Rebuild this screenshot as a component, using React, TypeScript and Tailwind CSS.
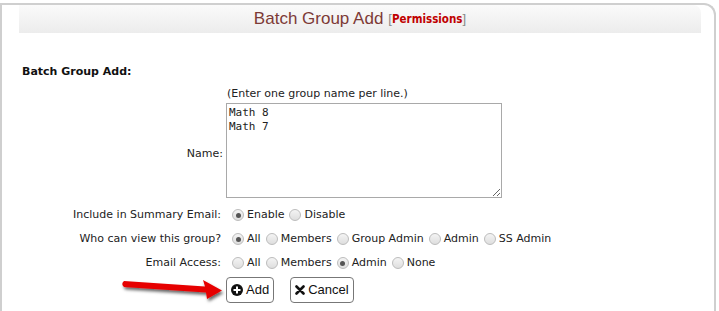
import React from "react";

const Radio = ({ label, checked }: { label: string; checked?: boolean }) => (
  <label className="flex items-center mr-[5px]">
    <span className="w-[12px] h-[12px] rounded-full border border-[#bcbcbc] bg-gradient-to-b from-[#f4f4f4] to-[#dedede] flex items-center justify-center mr-[3px]">
      {checked && <span className="w-[5px] h-[5px] rounded-full bg-[#555]"></span>}
    </span>
    <span>{label}</span>
  </label>
);

const Row = ({ label, children }: { label: string; children: React.ReactNode }) => (
  <div className="flex items-center h-[24px]">
    <div className="w-[222px] text-right pr-[3px]">{label}</div>
    <div className="flex items-center pl-[8px]">{children}</div>
  </div>
);

const App = () => {
  return (
    <div className="w-[719px] h-[311px] bg-white overflow-hidden relative font-['DejaVu_Sans',sans-serif] text-[11px] text-[#222]">
      <div className="mt-[3px] w-[716px] h-[320px] border-t-2 border-l-2 border-r-2 border-[#cfcfcf] rounded-tr-[12px]">
        <div className="ml-[17px] w-[682px] h-[28px] rounded-tr-[8px] bg-gradient-to-b from-[#fafafa] to-[#ececec] flex items-center justify-center">
          <span className="font-['Liberation_Sans',sans-serif] text-[17px] text-[#7d3a36]">Batch Group Add</span>
          <span className="ml-[5px] font-['Liberation_Sans',sans-serif] text-[13px] text-[#888]">
            [<span className="font-['DejaVu_Sans_Condensed',sans-serif] font-bold text-[11.5px] text-[#c00000]">Permissions</span>]
          </span>
        </div>

        <div className="pl-[20px] pt-[31px] font-bold text-[#111]">Batch Group Add:</div>

        <div className="pl-[225px] pt-[5px] text-[#222]">(Enter one group name per line.)</div>

        <div className="flex items-center mt-[1px]">
          <div className="w-[224px] text-right pr-[3px] pt-[7px]">Name:</div>
          <textarea
            defaultValue={"Math 8\nMath 7"}
            className="w-[276px] h-[95px] border border-[#a9a9a9] px-[2px] py-[2px] font-['DejaVu_Sans_Mono',monospace] text-[11px] leading-[14px] text-[#222] resize-y outline-none"
          ></textarea>
        </div>

        <div className="mt-[5px]">
          <Row label="Include in Summary Email:">
            <Radio label="Enable" checked />
            <Radio label="Disable" />
          </Row>
          <Row label="Who can view this group?">
            <Radio label="All" checked />
            <Radio label="Members" />
            <Radio label="Group Admin" />
            <Radio label="Admin" />
            <Radio label="SS Admin" />
          </Row>
          <Row label="Email Access:">
            <Radio label="All" />
            <Radio label="Members" />
            <Radio label="Admin" checked />
            <Radio label="None" />
          </Row>
        </div>

        <div className="flex items-center gap-[16px] pl-[224px] mt-[2px] font-['Liberation_Sans',sans-serif] text-[13px] text-[#111]">
          <button className="h-[26px] px-[4px] flex items-center gap-[3px] border border-[#777] rounded-[4px] bg-white">
            <svg width="12" height="12" viewBox="0 0 12 12">
              <circle cx="6" cy="6" r="6" fill="#111" />
              <rect x="2.5" y="5" width="7" height="2" fill="#fff" />
              <rect x="5" y="2.5" width="2" height="7" fill="#fff" />
            </svg>
            Add
          </button>
          <button className="h-[26px] px-[4px] flex items-center gap-[3px] border border-[#777] rounded-[4px] bg-white">
            <svg width="10" height="10" viewBox="0 0 10 10">
              <path d="M1.5 1.5 L8.5 8.5 M8.5 1.5 L1.5 8.5" stroke="#111" strokeWidth="2.6" strokeLinecap="round" />
            </svg>
            Cancel
          </button>
        </div>
      </div>

      <svg className="absolute left-[115px] top-[272px]" width="115" height="36" viewBox="0 0 115 36">
        <defs>
          <filter id="sh" x="-20%" y="-50%" width="140%" height="200%">
            <feDropShadow dx="1.5" dy="2.5" stdDeviation="1.5" floodColor="#000" floodOpacity="0.6" />
          </filter>
        </defs>
        <path
          d="M9 9 L90 14.5 L88 8 L107 18.5 L92 27 L91 20.5 L9 15 Q5.5 12 9 9 Z"
          fill="#e60000"
          filter="url(#sh)"
        />
      </svg>
    </div>
  );
};

export default App;
